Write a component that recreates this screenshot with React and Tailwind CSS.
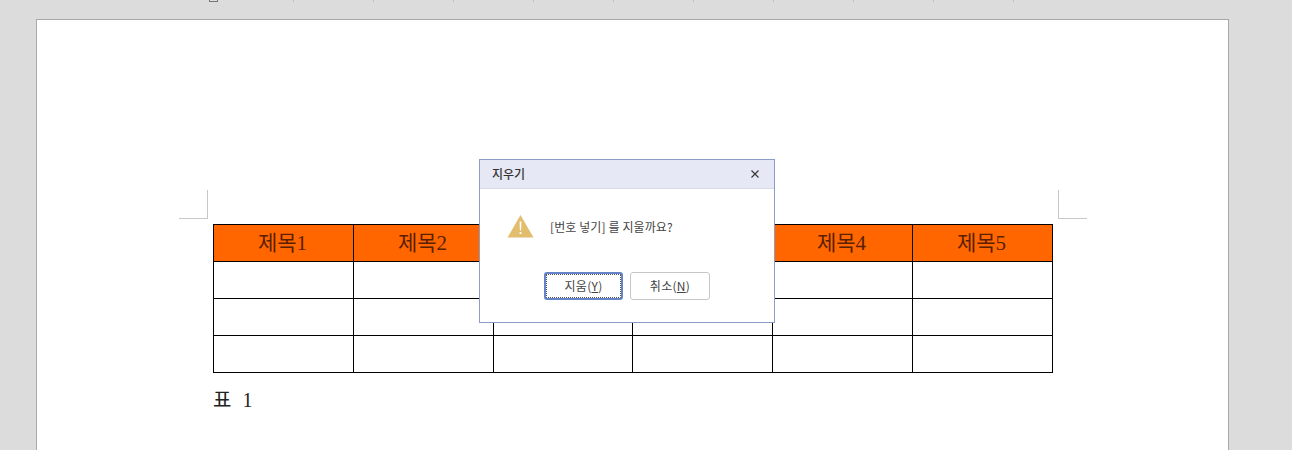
const columns = ['제목1', '제목2', '', '', '제목4', '제목5'];
const widths = ['w-[140px]', 'w-[140px]', 'w-[139px]', 'w-[140px]', 'w-[140px]', 'w-[140px]'];
const rows = [0, 1, 2];
const cellFont = "[font-family:'Liberation_Serif','Noto_Sans_CJK_KR',serif]";
const uiFont = "[font-family:'Noto_Sans_CJK_KR','Noto_Sans',sans-serif]";

function CropMark({ side }) {
    return (
        <div className={`w-[29px] h-[29px] border-[#c8c8c8] ${side === 'left' ? 'border-r border-b' : 'border-l border-b'}`}></div>
    );
}

function ConfirmDialog() {
    return (
        <div className={`absolute left-[479px] top-[159px] w-[296px] h-[164px] bg-white border border-[#8c9cc6] ${uiFont}`}>
            <div className="h-[29px] bg-[#e6e9f5] border-b border-[#d5d9e8] flex items-center justify-between pl-[12px] pr-[15px]">
                <span className="text-[12px] text-[#333] font-medium">지우기</span>
                <svg width="8" height="8" viewBox="0 0 8 8" className="text-[#333]">
                    <path d="M0.5 0.5L7.5 7.5M7.5 0.5L0.5 7.5" stroke="currentColor" strokeWidth="1.1" fill="none" />
                </svg>
            </div>
            <div className="flex items-center pl-[27px] pt-[25px]">
                <svg width="27" height="24" viewBox="0 0 27 24">
                    <path d="M13.5 1L26.5 23.5H0.5Z" fill="#e3bd6e" />
                    <path d="M12.6 7.5h1.8l-.3 9h-1.2Z" fill="#fff" />
                    <rect x="12.6" y="18" width="1.8" height="2" fill="#fff" />
                </svg>
                <span className="ml-[16px] mt-[2px] text-[12px] tracking-[0.1px] text-[#444]">[번호 넣기] 를 지울까요?</span>
            </div>
            <div className="flex justify-center gap-[7px] mt-[34px] pr-[1px]">
                <button className="w-[79px] h-[28px] pl-[1px] rounded-[3px] border-2 border-[#6583c8] outline-1 outline-dotted outline-offset-[-3px] outline-[#555] text-[12px] tracking-[0.3px] text-[#444] bg-white">
                    지움(<span className="underline">Y</span>)
                </button>
                <button className="w-[80px] h-[28px] pl-[1px] rounded-[3px] border border-[#c6c6c6] text-[12px] tracking-[0.3px] text-[#444] bg-white">
                    취소(<span className="underline">N</span>)
                </button>
            </div>
        </div>
    );
}

export default function App() {
    return (
        <div className="relative h-[450px] overflow-hidden bg-[#dcdcdc]">
            <div className="h-[2px] pl-[209px] flex">
                <div className="w-[9px] h-[2px] border-x border-b border-[#777]"></div>
                <div className="flex gap-[79px] ml-[75px]">
                    {[...Array(10)].map((_, i) => (
                        <div key={i} className="w-px h-[2px] bg-[#c0c0c0]"></div>
                    ))}
                </div>
            </div>
            <div className="ml-[36px] mt-[17px] w-[1193px] h-[431px] bg-white border border-b-0 border-[#a8a8a8] pt-[170px]">
                <div className="flex justify-between pl-[142px] pr-[141px]">
                    <CropMark side="left" />
                    <CropMark side="right" />
                </div>
                <div className="ml-[176px] mt-[5px] w-[840px] border-t border-l border-black">
                    <div className="flex h-[37px] bg-[#ff6600]">
                        {columns.map((title, i) => (
                            <div key={i} className={`${widths[i]} shrink-0 border-r border-b border-black flex items-center justify-center pt-[2px] pr-[2px] text-[21px] text-[#5a2000] ${cellFont}`}>
                                {title}
                            </div>
                        ))}
                    </div>
                    {rows.map((row) => (
                        <div key={row} className="flex h-[37px]">
                            {widths.map((w, i) => (
                                <div key={i} className={`${w} shrink-0 border-r border-b border-black`}></div>
                            ))}
                        </div>
                    ))}
                </div>
                <p className={`ml-[176px] mt-[13px] text-[20px] leading-[28px] text-[#222] flex ${cellFont}`}>
                    <span>표</span>
                    <span className="ml-[11px]">1</span>
                </p>
            </div>
            <ConfirmDialog />
        </div>
    );
}
